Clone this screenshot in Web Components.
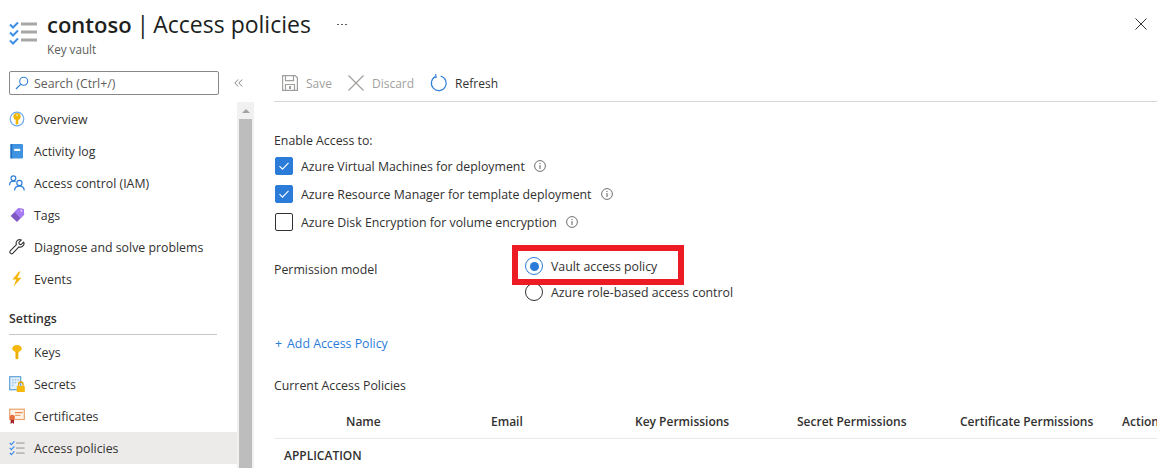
<!DOCTYPE html>
<html>
<head>
<meta charset="utf-8">
<title>contoso | Access policies</title>
<style>
	html, body{ margin: 0; height: 100%; overflow: hidden; background: #fff; }
	body{ font: 12.33px "Open Sans", "Noto Sans", sans-serif; color: #323130; }
</style>
</head>
<body>
<kv-blade>
	<kv-header slot="header" title-main="contoso" title-sub="Access policies" kind="Key vault"></kv-header>
	<kv-sidebar slot="side">
		<kv-nav-item icon="overview">Overview</kv-nav-item>
		<kv-nav-item icon="log">Activity log</kv-nav-item>
		<kv-nav-item icon="iam">Access control (IAM)</kv-nav-item>
		<kv-nav-item icon="tags">Tags</kv-nav-item>
		<kv-nav-item icon="wrench">Diagnose and solve problems</kv-nav-item>
		<kv-nav-item icon="events">Events</kv-nav-item>
		<kv-nav-group>Settings</kv-nav-group>
		<kv-nav-item icon="keys">Keys</kv-nav-item>
		<kv-nav-item icon="secrets">Secrets</kv-nav-item>
		<kv-nav-item icon="certs">Certificates</kv-nav-item>
		<kv-nav-item icon="policies" active>Access policies</kv-nav-item>
	</kv-sidebar>
	<kv-toolbar slot="toolbar"></kv-toolbar>
	<kv-policies slot="main"></kv-policies>
</kv-blade>

<script>
const ICONS = {
	overview: `<circle cx="8" cy="8" r="6.8" fill="#fff" stroke="#6aa9ef" stroke-width="1.2"/><circle cx="8" cy="5.5" r="3.6" fill="#f2b705"/><path d="M6.7 7h2.6v5.4L8 14l-1.3-1.6z" fill="#f2b705"/><circle cx="8" cy="4.2" r=".9" fill="#fde9a8"/>`,
	log: `<rect x="1.5" y="1" width="12.5" height="14.5" rx="1.2" fill="#3f93e0"/><rect x="1.5" y="1" width="1.6" height="14.5" fill="#1f6fbf"/><rect x="5.2" y="5.8" width="6" height="2.2" fill="#fff"/>`,
	iam: `<g fill="none" stroke="#2f7fd8" stroke-width="1.2"><circle cx="4.4" cy="3.3" r="2.4"/><path d="M.6 10.2c0-2.6 1.5-4 3.8-4 .9 0 1.6.2 2.2.6"/><circle cx="10.4" cy="8" r="2.6"/><path d="M5.6 15.6c0-2.8 2-4.4 4.8-4.4s4.8 1.6 4.8 4.4"/></g>`,
	tags: `<path d="M9.2 1.2l5.4 .8.6 5.4-7.2 7.6-6.4-6z" fill="#7e57c2"/><path d="M9.2 1.2l5.4 .8.6 5.4-3.6 3.8-6.2-6.2z" fill="#a67af4"/><circle cx="12.4" cy="3.8" r="1" fill="#e4d6fb"/>`,
	wrench: `<path d="M14.6 3.1l-2.5 2.5-1.8-.4-.4-1.8 2.5-2.5c-1.8-.6-3.8-.1-4.7 1.4-.7 1.1-.7 2.3-.3 3.4L1.5 11.6c-.8.8-.8 1.9-.1 2.6.7.7 1.8.7 2.6-.1l5.9-6.2c1.1.4 2.3.3 3.4-.4 1.5-1 2-3 1.3-4.4z" fill="#fff" stroke="#323130" stroke-width="1.1" stroke-linejoin="round"/>`,
	events: `<path d="M10 .6L3.4 8.6h3.8L4.6 15.6l7.9-8.9H8.4l3-6.1z" fill="#f8b60d"/>`,
	keys: `<path d="M8 15.6l-1.6-1.2V8C4.6 7.4 3.2 6.2 3.2 4.6 3.2 2.5 5.3 1 8 1s4.8 1.5 4.8 3.6c0 1.6-1.4 2.8-3.2 3.4v1.2l-.8.8.8.8v.8l-.8.8.8.8v1z" fill="#f6b80c"/><rect x="7.6" y="8" width=".8" height="6.5" fill="#d89a00"/>`,
	secrets: `<rect x=".7" y=".7" width="11" height="13" fill="#e4f1fb" stroke="#5ea0d8" stroke-width="1.2"/><g fill="#a4c8e6"><rect x="3" y="3" width="1.6" height="1.6"/><rect x="5.6" y="3" width="1.6" height="1.6"/><rect x="8.2" y="3" width="1.6" height="1.6"/><rect x="3" y="5.8" width="1.6" height="1.6"/><rect x="5.6" y="5.8" width="1.6" height="1.6"/><rect x="3" y="8.6" width="1.6" height="1.6"/></g><path d="M9.6 10V8.2a2.2 2.2 0 0 1 4.4 0V10" fill="none" stroke="#e0a100" stroke-width="1.3"/><rect x="7.8" y="10" width="8" height="6" fill="#f6b80c"/>`,
	certs: `<rect x=".7" y="1.2" width="14.6" height="10.3" fill="#fff3e8" stroke="#e8a36e" stroke-width="1.2"/><rect x="6" y="4" width="7.5" height="1.2" fill="#e8823e"/><rect x="6" y="6.8" width="5.5" height="1.2" fill="#e8a36e"/><path d="M1.6 11v5l1.7-1.2L5 16V11z" fill="#a4262c"/><circle cx="3.3" cy="9.3" r="2.6" fill="#e8703e"/>`,
	policies: `<g fill="none" stroke="#3f8fe6" stroke-width="1.3"><path d="M.8 3l1.6 1.6L5.4 1.4"/><path d="M.8 8l1.6 1.6 3-3.2"/><path d="M.8 13l1.6 1.6 3-3.2"/></g><g fill="#a8a7a6"><rect x="7" y="2.4" width="8.6" height="1.3"/><rect x="7" y="7.4" width="8.6" height="1.3"/><rect x="7" y="12.4" width="8.6" height="1.3"/></g>`,
};

class KvBlade extends HTMLElement {
	constructor(){
		super();
		this.attachShadow({mode : 'open'}).innerHTML = `
			<style>
				:host{ display: grid; grid-template-columns: 254px 1fr; grid-template-rows: 62px 1fr; height: 468px; overflow: hidden; }
				.head{ grid-column: 1 / 3; }
				.side{ grid-row: 2; min-height: 0; }
				.body{ grid-row: 2; padding: 0 10px 0 20px; min-width: 0; }
			</style>
			<div class="head"><slot name="header"></slot></div>
			<div class="side"><slot name="side"></slot></div>
			<div class="body"><slot name="toolbar"></slot><slot name="main"></slot></div>
		`;
	}
}

class KvHeader extends HTMLElement {
	connectedCallback(){
		this.attachShadow({mode : 'open'}).innerHTML = `
			<style>
				:host{ display: flex; height: 62px; padding: 0 20px 0 9px; box-sizing: border-box; }
				svg.logo{ width: 28px; height: 28px; margin-top: 19px; flex: none; }
				.txt{ margin-left: 10px; padding-top: 6px; }
				h1{ margin: 0; font-size: 23px; line-height: 36px; font-weight: 400; color: #201f1e; white-space: nowrap; display: flex; }
				b{ font-size: 22px; font-weight: 600; }
				.sep{ margin: 0 4px 0 5px; }
				.kind{ font-size: 11.7px; line-height: 14px; color: #605e5c; }
				.more{ margin: 18px 0 0 26px; display: flex; gap: 2px; }
				.more i{ width: 2px; height: 1px; background: #605e5c; }
				.close{ margin-left: auto; margin-top: 18px; width: 12px; height: 12px; }
			</style>
			<svg class="logo" viewBox="0 0 28 28">
				<g fill="none" stroke="#3f8fe6" stroke-width="2"><path d="M1 5.5l3 3 5-5"/><path d="M1 13.5l3 3 5-5"/><path d="M1 21.5l3 3 5-5"/></g>
				<g fill="#a8a7a6"><rect x="12" y="3.5" width="16" height="3"/><rect x="12" y="11.5" width="16" height="3"/><rect x="12" y="19.5" width="16" height="3"/></g>
			</svg>
			<div class="txt">
				<h1><b>${this.getAttribute('title-main')}</b><span class="sep">|</span>${this.getAttribute('title-sub')}<span class="more"><i></i><i></i><i></i></span></h1>
				<div class="kind">${this.getAttribute('kind')}</div>
			</div>
			<svg class="close" viewBox="0 0 12 12"><path d="M.5 .5l11 11M11.5 .5l-11 11" stroke="#323130" stroke-width="1"/></svg>
		`;
	}
}

class KvSidebar extends HTMLElement {
	constructor(){
		super();
		this.attachShadow({mode : 'open'}).innerHTML = `
			<style>
				:host{ display: grid; grid-template-columns: 237px 17px; grid-template-rows: 40px 1fr; height: 100%; }
				.top{ grid-column: 1 / 3; display: flex; align-items: center; padding: 2px 0 0 9px; box-sizing: border-box; }
				.search{ box-sizing: border-box; width: 210px; height: 24px; border: 1px solid #8a8886; border-radius: 2px; display: flex; align-items: center; padding-left: 5px; color: #605e5c; }
				.search svg{ width: 14px; height: 14px; margin-right: 5px; }
				.coll{ width: 9px; height: 8px; margin-left: 15px; }
				.list{ display: flex; flex-direction: column; margin-top: 1px; }
				.bar{ background: #f1f1f1; display: flex; flex-direction: column; padding: 0 2px 0 2px; }
				.arrow{ height: 17px; display: flex; justify-content: center; align-items: center; }
				.arrow i{ border: 4px solid transparent; border-bottom: 4px solid #a3a3a3; border-top: 0; }
				.thumb{ flex: 1; background: #bdbdbd; }
			</style>
			<div class="top">
				<div class="search">
					<svg viewBox="0 0 14 14"><circle cx="8.7" cy="5.3" r="4" fill="none" stroke="#2f7fd8" stroke-width="1.1"/><path d="M5.8 8.2L1 13" stroke="#2f7fd8" stroke-width="1.2"/></svg>
					<span>Search (Ctrl+/)</span>
				</div>
				<svg class="coll" viewBox="0 0 9 8"><path d="M4.2 .5L.8 4l3.4 3.5M8.2 .5L4.8 4l3.4 3.5" fill="none" stroke="#8a8886" stroke-width="1"/></svg>
			</div>
			<div class="list"><slot></slot></div>
			<div class="bar"><div class="arrow"><i></i></div><div class="thumb"></div></div>
		`;
	}
}

class KvNavItem extends HTMLElement {
	connectedCallback(){
		this.attachShadow({mode : 'open'}).innerHTML = `
			<style>
				:host{ display: flex; align-items: center; height: 32px; padding-left: 9px; color: #323130; }
				:host([active]){ background: #edebe9; }
				svg{ width: 16px; height: 16px; margin-right: 9px; flex: none; }
			</style>
			<svg viewBox="0 0 16 16">${ICONS[this.getAttribute('icon')]}</svg>
			<slot></slot>
		`;
	}
}

class KvNavGroup extends HTMLElement {
	constructor(){
		super();
		this.attachShadow({mode : 'open'}).innerHTML = `
			<style>
				:host{ display: flex; align-items: center; height: 31px; margin: 8px 20px 1px 9px; border-bottom: 1px solid #c8c6c4; font-weight: 600; }
			</style>
			<slot></slot>
		`;
	}
}

class KvToolbar extends HTMLElement {
	constructor(){
		super();
		this.attachShadow({mode : 'open'}).innerHTML = `
			<style>
				:host{ display: flex; align-items: center; height: 36px; padding: 3px 0 0 8px; border-bottom: 1px solid #d8d6d4; font-size: 12px; }
				span{ display: flex; align-items: center; margin-right: 16px; color: #a19f9d; }
				span.on{ color: #323130; }
				svg{ width: 16px; height: 16px; margin-right: 8px; }
				.on svg{ margin-right: 9px; }
			</style>
			<span><svg viewBox="0 0 16 16"><path d="M.6 .6h12.6l2.2 2.2v12.6H.6z" fill="none" stroke="#a19f9d" stroke-width="1.2"/><path d="M3.5 .6v5h8v-5M3.5 15.4V9.5h9v5.9" fill="none" stroke="#a19f9d" stroke-width="1.2"/><rect x="7" y="11" width="2" height="3" fill="#a19f9d"/></svg>Save</span>
			<span><svg viewBox="0 0 16 16"><path d="M.5 .5l15 15M15.5 .5l-15 15" stroke="#a19f9d" stroke-width="1.2"/></svg>Discard</span>
			<span class="on"><svg viewBox="0 0 16 16" style="overflow:visible"><path d="M5.6 1.5A7.4 7.4 0 1 0 10.6 1" fill="none" stroke="#2f7fd8" stroke-width="1.2"/><path d="M5.6 -1l.6 3.2-3.2 .4" fill="none" stroke="#2f7fd8" stroke-width="1.1"/></svg>Refresh</span>
		`;
	}
}

class KvCheck extends HTMLElement {
	connectedCallback(){
		const on = this.hasAttribute('checked');
		this.attachShadow({mode : 'open'}).innerHTML = `
			<style>
				:host{ display: flex; align-items: center; height: 28px; }
				.box{ box-sizing: border-box; width: 18px; height: 18px; margin-left: 1px; border-radius: 2px; margin-right: 8px; display: flex; flex: none; border: 1px solid ${on ? '#2b7cd8' : '#323130'}; background: ${on ? '#2b7cd8' : '#fff'}; }
				.box svg{ width: 16px; height: 16px; }
				.info{ width: 12px; height: 12px; margin-left: 9px; }
			</style>
			<div class="box">${on ? '<svg viewBox="0 0 16 16"><path d="M3.5 8.2l3 3 6-6.4" fill="none" stroke="#fff" stroke-width="1.1"/></svg>' : ''}</div>
			<slot></slot>
			<svg class="info" viewBox="0 0 12 12"><circle cx="6" cy="6" r="5.4" fill="none" stroke="#605e5c" stroke-width=".9"/><rect x="5.5" y="5" width="1" height="4" fill="#605e5c"/><rect x="5.5" y="3" width="1" height="1" fill="#605e5c"/></svg>
		`;
	}
}

class KvRadio extends HTMLElement {
	connectedCallback(){
		const on = this.hasAttribute('checked');
		this.attachShadow({mode : 'open'}).innerHTML = `
			<style>
				:host{ display: flex; align-items: center; height: 26px; }
				.dot{ box-sizing: border-box; width: 18px; height: 18px; border-radius: 50%; margin-right: 8px; flex: none; display: flex; align-items: center; justify-content: center; border: 1px solid ${on ? '#2b7cd8' : '#323130'}; }
				.dot i{ display: ${on ? 'block' : 'none'}; width: 9px; height: 9px; border-radius: 50%; background: #2b7cd8; }
			</style>
			<div class="dot"><i></i></div><slot></slot>
		`;
	}
}

class KvPolicies extends HTMLElement {
	constructor(){
		super();
		this.attachShadow({mode : 'open'}).innerHTML = `
			<style>
				:host{ display: block; }
				.lbl{ margin-top: 30px; line-height: 18px; }
				.checks{ margin-top: 2px; }
				.perm{ display: grid; grid-template-columns: 251px auto; margin-top: 17px; }
				.perm .pl{ margin-top: 8px; line-height: 18px; }
				.radios{ justify-self: start; position: relative; }
				.mark{ position: absolute; left: -13px; top: -8px; width: 172px; height: 40px; box-sizing: border-box; border: 6px solid #ed1c24; pointer-events: none; }
				.add{ margin-top: 30px; line-height: 18px; color: #2b7cd8; display: flex; gap: 5px; padding-left: 1px; }
				.cur{ margin-top: 24px; line-height: 18px; }
				table{ margin-top: 9px; border-collapse: collapse; table-layout: fixed; width: 883px; font-size: 12px; }
				th{ font-weight: 600; height: 33px; padding: 1px 0 0; text-align: left; border-bottom: 1px solid #edebe9; white-space: nowrap; overflow: hidden; }
				td{ font-weight: 600; padding: 8px 0 0 10px; line-height: 18px; }
			</style>
			<div class="lbl">Enable Access to:</div>
			<div class="checks">
				<kv-check checked>Azure Virtual Machines for deployment</kv-check>
				<kv-check checked>Azure Resource Manager for template deployment</kv-check>
				<kv-check>Azure Disk Encryption for volume encryption</kv-check>
			</div>
			<div class="perm">
				<div class="pl">Permission model</div>
				<div class="radios">
					<kv-radio checked>Vault access policy</kv-radio>
					<kv-radio>Azure role-based access control</kv-radio>
					<div class="mark"></div>
				</div>
			</div>
			<div class="add"><span>+</span><span>Add Access Policy</span></div>
			<div class="cur">Current Access Policies</div>
			<table>
				<colgroup><col style="width:217px"><col style="width:144px"><col style="width:162px"><col style="width:163px"><col style="width:162px"><col style="width:35px"></colgroup>
				<tr><th style="padding-left:72px">Name</th><th>Email</th><th>Key Permissions</th><th>Secret Permissions</th><th>Certificate Permissions</th><th>Action</th></tr>
				<tr><td colspan="6">APPLICATION</td></tr>
			</table>
		`;
	}
}

window.customElements.define('kv-blade', KvBlade);
window.customElements.define('kv-header', KvHeader);
window.customElements.define('kv-sidebar', KvSidebar);
window.customElements.define('kv-nav-item', KvNavItem);
window.customElements.define('kv-nav-group', KvNavGroup);
window.customElements.define('kv-toolbar', KvToolbar);
window.customElements.define('kv-check', KvCheck);
window.customElements.define('kv-radio', KvRadio);
window.customElements.define('kv-policies', KvPolicies);
</script>
</body>
</html>
